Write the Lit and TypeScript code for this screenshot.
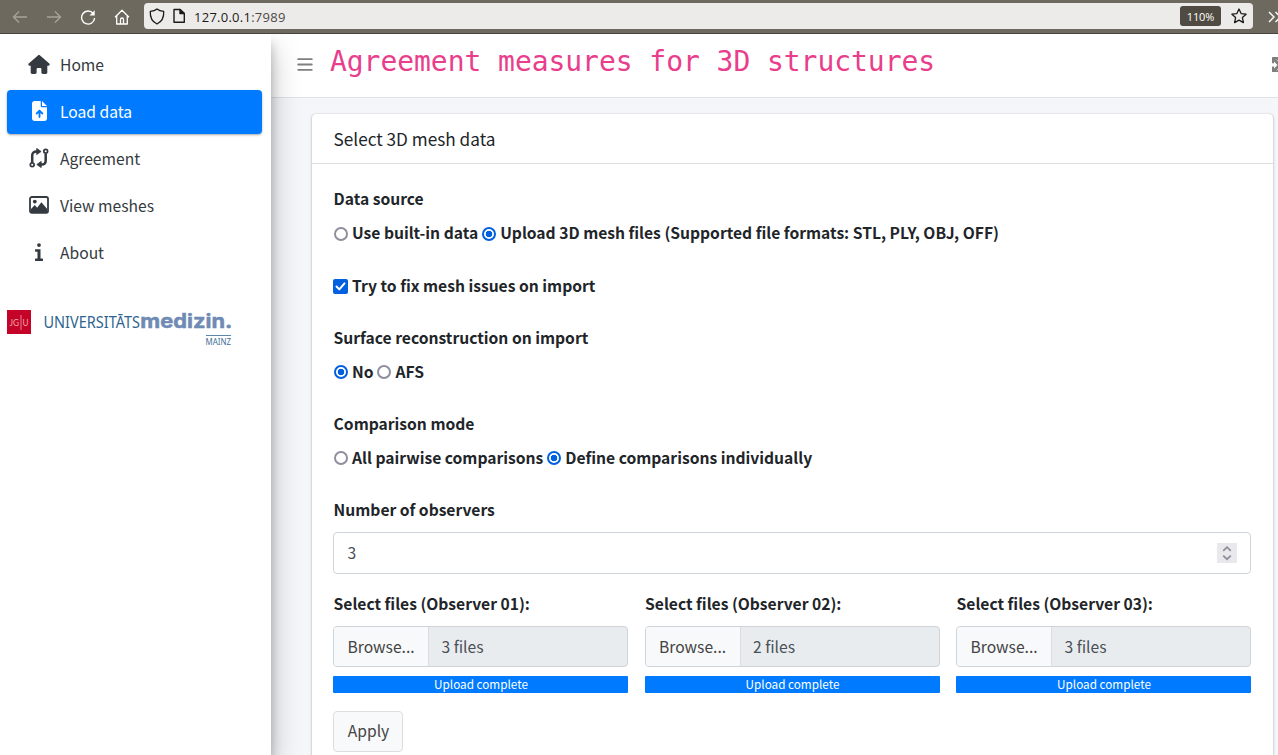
import { LitElement, html, css, svg } from "lit";
import { customElement } from "lit/decorators.js";

const house = svg`<svg width="22" height="19" viewBox="0 0 576 512" fill="currentColor"><path d="M575.8 255.5c0 18-15 32.1-32 32.1l-32 0 .7 160.2c0 2.7-.2 5.4-.5 8.1V472c0 22.1-17.9 40-40 40H456c-1.1 0-2.2 0-3.3-.1c-1.4 .1-2.8 .1-4.2 .1H416 392c-22.1 0-40-17.9-40-40V448 384c0-17.7-14.3-32-32-32H256c-17.7 0-32 14.3-32 32v64 24c0 22.1-17.9 40-40 40H160 128.1c-1.5 0-3-.1-4.5-.2c-1.2 .1-2.4 .2-3.6 .2H104c-22.1 0-40-17.9-40-40V360c0-.9 0-1.9 .1-2.8V287.6H32c-18 0-32-14-32-32.1c0-9 3-17 10-24L266.4 8c7-7 15-8 22-8s15 2 21 7L564.8 231.5c8 7 12 15 11 24z"/></svg>`;
const fileUp = svg`<svg width="15" height="20" viewBox="0 0 384 512" fill="currentColor"><path fill-rule="evenodd" d="M64 0C29 0 0 29 0 64V448c0 35 29 64 64 64H320c35 0 64-29 64-64V160H256c-18 0-32-14-32-32V0zM256 0V128H384zM216 408c0 13-11 24-24 24s-24-11-24-24V306l-31 31c-9 9-25 9-34 0s-9-25 0-34l72-72c9-9 25-9 34 0l72 72c9 9 9 25 0 34s-25 9-34 0l-31-31z"/></svg>`;
const compare = svg`<svg width="20" height="20" viewBox="0 0 20 20" fill="none" stroke="currentColor"><circle cx="3.200" cy="16.800" r="1.900" stroke-width="1.700"/><circle cx="16.700" cy="3.200" r="1.900" stroke-width="1.700"/><path d="M3.200 14.500V7.600C3.200 5 4.800 3.500 7.400 3.500H8.500M16.700 5.500V12.400C16.700 15 15.100 16.500 12.500 16.500H11.400" stroke-width="2.500"/><path d="M7.700.4V6.600L12.100 3.500zM12.200 13.400V19.600L7.800 16.500z" fill="currentColor" stroke-width=".8" stroke-linejoin="round"/></svg>`;
const picture = svg`<svg width="20" height="18" viewBox="0 0 20 18"><rect x="1" y="1" width="18" height="15.8" rx="1.8" fill="none" stroke="currentColor" stroke-width="1.8"/><circle cx="5.8" cy="5.6" r="1.9" fill="currentColor"/><path d="M2 16v-3.100l3.8-3.900 2.300 2.700L12.400 6.300l5.600 6.500V16z" fill="currentColor"/></svg>`;
const info = svg`<svg width="8" height="18" viewBox="0 0 8 18" fill="currentColor"><circle cx="4" cy="2.1" r="1.9"/><path d="M.7 6.2h4.8v9.3H7.3c.4 0 .7.3.7.6V17.4c0 .3-.3.6-.7.6H.7C.3 18 0 17.700 0 17.400V16.100c0-.3.3-.6.7-.6H2.500V8.700H.7C.3 8.700 0 8.400 0 8.100V6.800c0-.3.3-.6.700-.6z"/></svg>`;

const nav = [
  { label: "Home", icon: house },
  { label: "Load data", icon: fileUp, active: true },
  { label: "Agreement", icon: compare },
  { label: "View meshes", icon: picture },
  { label: "About", icon: info },
];

const observers = [
  { id: "01", files: "3 files" },
  { id: "02", files: "2 files" },
  { id: "03", files: "3 files" },
];

@customElement("browser-bar")
class BrowserBar extends LitElement {
  static styles = css`
    :host { display: flex; align-items: center; height: 34px; box-sizing: border-box; background: #6e695e;
      border-bottom: 1px solid #4a443d; flex: none; overflow: hidden; color: #fff; }
    svg { display: block; flex: none; fill: none; }
    .tools { display: flex; align-items: center; width: 144px; flex: none; box-sizing: border-box; padding-left: 12px; gap: 18px; }
    .dim { opacity: .38; }
    .address { display: flex; align-items: center; width: 1109px; height: 26px; box-sizing: border-box; flex: none; margin-bottom: 1px;
      background: #edebe9; border-radius: 4px; color: #1c1b19; padding: 0 6px 0 5px; font: 13px "Open Sans", sans-serif; }
    .doc { margin-left: 7px; }
    .url { margin-left: 8px; flex: 1; letter-spacing: .26px; padding-top: 1px; }
    .muted { color: #4b4946; }
    .zoom { background: #504b42; color: #fff; border-radius: 3px; width: 41px; height: 20px; line-height: 21px; text-align: center;
      font-size: 11px; letter-spacing: -.1px; margin-right: 10px; }
    .more { margin-left: 15px; }
  `;
  render() {
    return html`
      <div class="tools">
        <svg class="dim" width="16" height="16" viewBox="0 0 16 16" stroke="#fff" stroke-width="1.4"><path d="M15 8H1.500M7 2.500 1.500 8 7 13.500"/></svg>
        <svg class="dim" width="16" height="16" viewBox="0 0 16 16" stroke="#fff" stroke-width="1.4"><path d="M1 8h13.500M9 2.500 14.500 8 9 13.500"/></svg>
        <svg width="16" height="16" viewBox="0 0 16 16" stroke="#fff" stroke-width="1.4"><path d="M13.200 4.500A6.500 6.500 0 1 0 14.600 9"/><path d="M9.500 6.500H14.700V1.300z" fill="#fff" stroke="none"/></svg>
        <svg width="16" height="16" viewBox="0 0 16 16" stroke="#fff" stroke-width="1.3" stroke-linejoin="round"><path d="M1 8.200 8 1.200l7 7M2.700 6.800V15H13.300V6.800M6.500 15V10.500a1.500 1.500 0 0 1 3 0V15"/></svg>
      </div>
      <div class="address">
        <svg width="16" height="17" viewBox="0 0 16 17" stroke="#1c1b19" stroke-width="1.300" stroke-linejoin="round"><path d="M8 1C6.200 2.600 4 3.200 1.300 3.300 1 8.500 2.500 13.500 8 16c5.500-2.500 7-7.500 6.700-12.700C12 3.200 9.800 2.600 8 1z"/></svg>
        <svg class="doc" width="14" height="16" viewBox="0 0 14 16" stroke="#1c1b19" stroke-width="1.400" stroke-linejoin="round"><path d="M2 1.500H8L12.300 5.500V14.300H2z"/><path d="M8 1.500V5.500H12.300z" fill="#1c1b19"/></svg>
        <span class="url">127.0.0.1<span class="muted">:7989</span></span>
        <span class="zoom">110%</span>
        <svg width="16" height="16" viewBox="0 0 16 16" stroke="#1c1b19" stroke-width="1.300" stroke-linejoin="round"><path d="m8 1 2.100 4.600 5 .6-3.700 3.400 1 5L8 12.100l-4.400 2.500 1-5L.9 6.200l5-.6z"/></svg>
      </div>
      <svg class="more" width="14" height="14" viewBox="0 0 14 14" stroke="#fff" stroke-width="1.400"><path d="m1 2 5 5-5 5M7.500 2l5 5-5 5"/></svg>
    `;
  }
}

@customElement("side-nav")
class SideNav extends LitElement {
  static styles = css`
    :host { display: block; width: 271px; flex: none; background: #fff; z-index: 2; box-sizing: border-box; padding: 9px 9px 0 7px;
      box-shadow: 0 14px 28px rgba(0,0,0,.25), 0 10px 10px rgba(0,0,0,.22); }
    .item { display: flex; align-items: center; height: 44px; margin-bottom: 3px; border-radius: 4px; color: #343a40; }
    .active { background: #007bff; color: #fff; box-shadow: 0 1px 3px rgba(0,0,0,.12), 0 1px 2px rgba(0,0,0,.24); }
    .icon { width: 42px; margin-left: 11px; display: flex; justify-content: center; padding-bottom: 2px; }
    .icon svg { display: block; }
    .logo { display: block; margin-top: 26px; }
  `;
  render() {
    return html`
      ${nav.map((n) => html`<div class="item ${n.active ? "active" : ""}"><span class="icon">${n.icon}</span><span>${n.label}</span></div>`)}
      <svg class="logo" width="230" height="50" viewBox="0 0 230 50">
        <rect y="9" width="24" height="24" fill="#c50328"/>
        <text x="2.500" y="25" font-family="Lato" font-size="10" fill="#eda5ad" textLength="9.500" lengthAdjust="spacingAndGlyphs">JG</text>
        <path d="M14 14v15" stroke="#eda5ad" stroke-width=".8"/>
        <text x="15.500" y="25" font-family="Lato" font-size="10" fill="#eda5ad" textLength="6" lengthAdjust="spacingAndGlyphs">U</text>
        <text x="36.500" y="27" font-family="Noto Sans" font-size="16" fill="#2d6490" textLength="96.500" lengthAdjust="spacingAndGlyphs">UNIVERSITĀTS</text>
        <text x="133.300" y="27" font-family="Inter" font-weight="700" font-size="19.500" fill="#6f8ab3" stroke="#6f8ab3" stroke-width=".5" textLength="92" lengthAdjust="spacingAndGlyphs">medizin.</text>
        <path d="M199 34.500h25" stroke="#5d86a8" stroke-width="1"/>
        <text x="198.500" y="44" font-family="Noto Sans" font-size="9.800" fill="#3f7199" textLength="25.500" lengthAdjust="spacingAndGlyphs">MAINZ</text>
      </svg>`;
  }
}

@customElement("app-root")
class AppRoot extends LitElement {
  static styles = css`
    :host { display: flex; flex-direction: column; height: 755px; overflow: hidden; background: #f4f6f9; color: #212529;
      font: 15.64px/26px "Noto Sans CJK SC", "Noto Sans", sans-serif; }
    .page { display: flex; flex: 1; min-height: 0; overflow: hidden; }
    .main { flex: 1; min-width: 0; }
    .top { display: flex; height: 63px; background: #fff; border-bottom: 1px solid #dee2e6; }
    .bars { display: block; margin: 24px 0 0 25.500px; }
    .title { margin-left: 17.500px; flex: 1; font: 28px/56px "DejaVu Sans Mono", monospace; color: #e83e8c; white-space: nowrap; letter-spacing: -.05px; }
    .side { display: block; margin: 23px -9px 0 0; flex: none; }
    .card { margin: 16px 5px 0 41px; height: 800px; background: #fff; border-radius: 4px; box-shadow: 0 0 1px rgba(0,0,0,.25), 0 1px 3px rgba(0,0,0,.25); }
    .head { height: 49px; line-height: 50px; padding-left: 21.500px; border-bottom: 1px solid #dfdfdf; font-size: 17.200px; }
    .body { padding: 22px 22px 0 21px; }
    .strong { font-weight: 700; padding-left: .6px; height: 26px; white-space: nowrap; }
    .choices { display: flex; align-items: center; gap: 4px; padding-left: 1px; }
    .radio { width: 14px; height: 14px; box-sizing: border-box; border: 2px solid #8f8f9d; border-radius: 50%; flex: none; }
    .radio.on { border-color: #0060df; background: radial-gradient(circle, #0060df 0 3px, #fff 3.600px); }
    .check { display: block; margin-left: -1px; }
    .data { margin-top: 8px; }
    .data .radio { margin-top: 1px; }
    .fix { margin-top: 27px; }
    .next { margin-top: 8px; }
    .section { margin-top: 26px; }
    .number { display: flex; align-items: center; justify-content: space-between; height: 42px; box-sizing: border-box; margin-top: 9px;
      border: 1px solid #ced4da; border-radius: 4px; padding: 0 13px 0 13.500px; color: #495057; }
    .number svg { display: block; }
    .grid { display: grid; grid-template-columns: repeat(3, 1fr); gap: 16.500px; margin-top: 17px; }
    .file { display: flex; height: 41px; box-sizing: border-box; margin-top: 9px; border: 1px solid #ced4da; border-radius: 4px;
      background: #e9ecef; line-height: 40px; color: #495057; overflow: hidden; }
    .browse { width: 94px; background: #f8f9fa; border-right: 1px solid #ddd; color: #444; text-indent: 13.500px; }
    .name { padding-left: 12.500px; }
    .done { height: 17px; margin-top: 9px; background: #007bff; color: #fff; border-radius: 1px; text-align: center; font-size: 11.730px; line-height: 16px; text-indent: 1px; }
    .apply { display: block; width: 70px; height: 41px; box-sizing: border-box; margin-top: 18px; border: 1px solid #ddd; border-radius: 4px;
      background: #f8f9fa; color: #444; font: inherit; line-height: 38px; padding: 0 0 1px 1px; text-align: center; }
  `;

  option(label: string, on: boolean) {
    return html`<span class="radio ${on ? "on" : ""}"></span><span>${label}</span>`;
  }

  render() {
    return html`
      <browser-bar></browser-bar>
      <div class="page">
        <side-nav></side-nav>
        <div class="main">
          <div class="top">
            <svg class="bars" width="16" height="14" viewBox="0 0 16 14"><path d="M1.200 1.200h13.600M1.200 6.500h13.600M1.200 11.800h13.600" stroke="#7f7f7f" stroke-width="1.800" stroke-linecap="round"/></svg>
            <div class="title">Agreement measures for 3D structures</div>
            <svg class="side" width="15" height="15" viewBox="0 0 15 15"><rect width="15" height="15" rx=".5" fill="#7f7f7f"/><path d="M0 6.300h2V4.500L5.500 8 2 11.500V9.500H0z" fill="#fff"/><path d="M4.500 2.500 6 4M4.500 13.500 6 12" stroke="#c8c8c8" stroke-width="1"/></svg>
          </div>
          <div class="card">
            <div class="head">Select 3D mesh data</div>
            <div class="body">
              <div class="strong">Data source</div>
              <div class="strong choices data">${this.option("Use built-in data", false)}${this.option("Upload 3D mesh files (Supported file formats: STL, PLY, OBJ, OFF)", true)}</div>
              <div class="strong choices fix">
                <svg class="check" width="15" height="15" viewBox="0 0 15 15"><rect width="15" height="15" rx="2" fill="#0060df"/><path d="m3.500 7.500 2.800 2.900 5.200-6" fill="none" stroke="#fff" stroke-width="2" stroke-linecap="round" stroke-linejoin="round"/></svg>
                <span>Try to fix mesh issues on import</span>
              </div>
              <div class="strong section">Surface reconstruction on import</div>
              <div class="strong choices next">${this.option("No", true)}${this.option("AFS", false)}</div>
              <div class="strong section">Comparison mode</div>
              <div class="strong choices next">${this.option("All pairwise comparisons", false)}${this.option("Define comparisons individually", true)}</div>
              <div class="strong section">Number of observers</div>
              <div class="number"><span>3</span>
                <svg width="20" height="20" viewBox="0 0 20 20"><rect width="20" height="20" fill="#e9e9ed"/><path d="m6.200 7.800 3.800-3.600 3.800 3.600M6.200 12.600l3.800 3.600 3.800-3.600" fill="none" stroke="#8f8f9d" stroke-width="1.800"/></svg>
              </div>
              <div class="grid">
                ${observers.map((o) => html`<div>
                  <div class="strong">Select files (Observer ${o.id}):</div>
                  <div class="file"><span class="browse">Browse...</span><span class="name">${o.files}</span></div>
                  <div class="done">Upload complete</div>
                </div>`)}
              </div>
              <button class="apply">Apply</button>
            </div>
          </div>
        </div>
      </div>
    `;
  }
}
